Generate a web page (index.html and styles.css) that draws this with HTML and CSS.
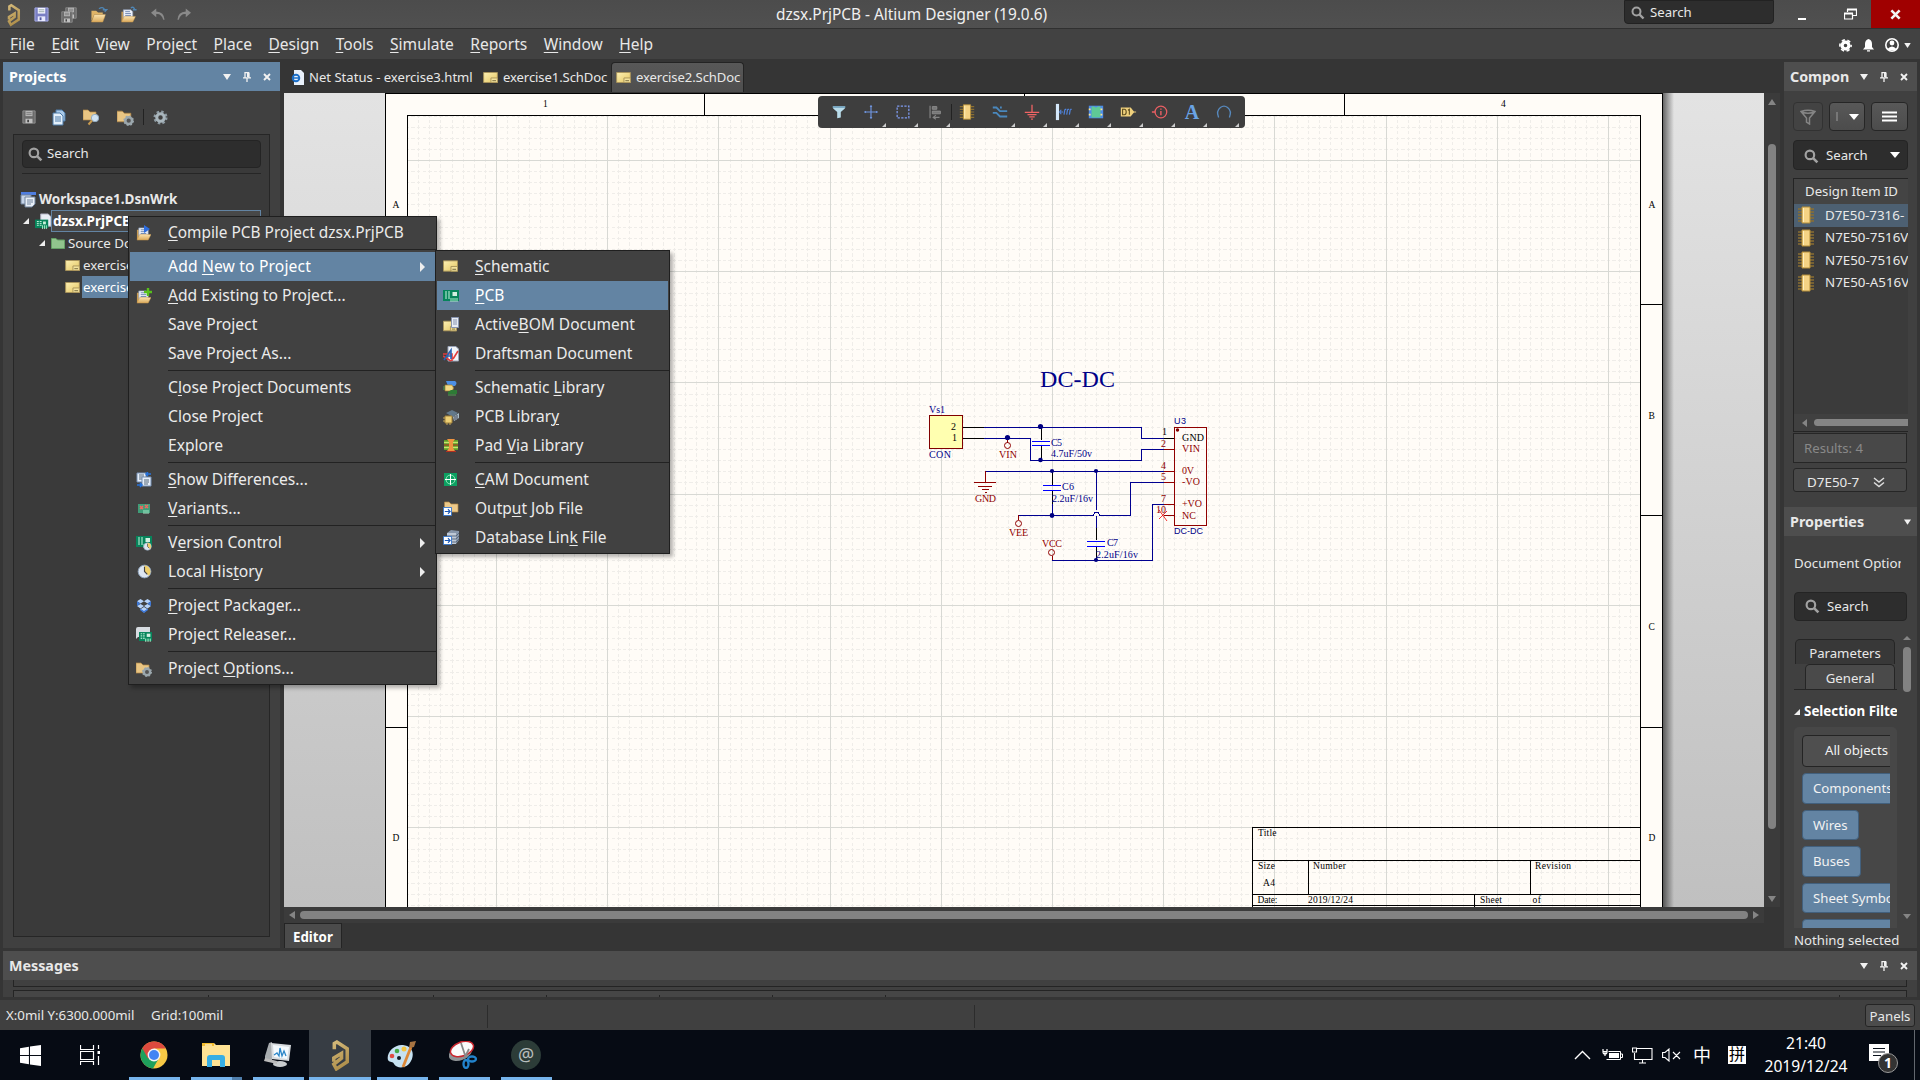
FILE: index.html
```html
<!DOCTYPE html>
<html lang="en">
<head>
<meta charset="utf-8">
<title>dzsx.PrjPCB - Altium Designer (19.0.6)</title>
<link rel="stylesheet" href="styles.css">
</head>
<body>
<svg class="defs" aria-hidden="true">
  <defs>
    <linearGradient id="gold" gradientUnits="userSpaceOnUse" x1="0" y1="0" x2="20" y2="30"><stop offset="0" stop-color="#d9bf80"/><stop offset="1" stop-color="#a5843f"/></linearGradient>
    <linearGradient id="fold" x1="0" y1="0" x2="0" y2="1"><stop offset="0" stop-color="#fbe3ae"/><stop offset="1" stop-color="#d9a95c"/></linearGradient>
    <linearGradient id="sheet" x1="0" y1="0" x2="1" y2="1"><stop offset="0" stop-color="#fdf0b4"/><stop offset="1" stop-color="#e3c661"/></linearGradient>
    <symbol id="altium" viewBox="0 0 20 30"><path d="M4.500 9V3.500L7 2L17 8.500V21L6.500 28L4 23.500L11.500 17.500V13L4 17.500V21" fill="none" stroke="url(#gold)" stroke-width="3.400"/></symbol>
    <symbol id="save" viewBox="0 0 16 16"><path d="M1 1H15V15H1Z" fill="#7a7fc4" stroke="#a9aee6"/><path d="M4 1H12V7H4Z" fill="#f4f5ff"/><path d="M5 3H11M5 5H11" stroke="#9aa"/><path d="M4 10H12V15H4Z" fill="#e8eaff"/><path d="M6 11H8V14H6Z" fill="#555ba4"/></symbol>
    <symbol id="save-gray" viewBox="0 0 16 16"><path d="M1 1H15V15H1Z" fill="#6b6b6b" stroke="#929292"/><path d="M4 1H12V7H4Z" fill="#b5b5b5"/><path d="M5 3H11M5 5H11" stroke="#777"/><path d="M4 10H12V15H4Z" fill="#c0c0c0"/><path d="M6 11H8V14H6Z" fill="#444"/></symbol>
    <symbol id="folder" viewBox="0 0 16 16"><path d="M1 14V3H6L8 5H13V7H4Z" fill="#e0b467"/><path d="M1 15L4 7H16L13 15Z" fill="url(#fold)" stroke="#c89648" stroke-width=".5"/></symbol>
    <symbol id="folder-docs" viewBox="0 0 16 16"><path d="M1 14V4H4V14Z" fill="#c99b50"/><path d="M3 2H11L13 4V11H3Z" fill="#eef3fb" stroke="#8b9bb8" stroke-width=".7"/><path d="M5 4H10M5 6H11M5 8H11" stroke="#6d86b0"/><path d="M1 15L4 9H16L13 15Z" fill="url(#fold)" stroke="#c89648" stroke-width=".5"/></symbol>
    <symbol id="sch" viewBox="0 0 16 12"><path d="M.5 .5H15.5V11.5H.5Z" fill="url(#sheet)" stroke="#a8935a"/><path d="M8.500 6.500H15.500V11.500H8.500Z" fill="#f4e39c" stroke="#a8935a"/><path d="M10 9.500H14" stroke="#6f6238"/></symbol>
    <symbol id="pcb" viewBox="0 0 16 13"><path d="M0 1H16V12H0Z" fill="#07845b"/><path d="M2 3H4M2 5H4M2 7H4M2 9H4M5 3H7M5 5H7M5 7H7M5 9H7" stroke="#c8f5df"/><path d="M9.500 3H14V7H9.500Z" fill="#d2efe0"/><path d="M8 9V13M10 9V13M12 9V13M14 9V13" stroke="#a9ecc8"/></symbol>
    <symbol id="pcb-doc" viewBox="0 0 18 18"><path d="M6 1H14L17 4V14H6Z" fill="#e9edf5" stroke="#aab"/><path d="M0 7H14V16H0Z" fill="#07845b"/><path d="M2 9H4M2 11H4M2 13H4M5 9H7M5 11H7M5 13H7" stroke="#c8f5df"/><path d="M8.500 9H11.500V12H8.500Z" fill="#c9f0da"/><path d="M8 13V17M10 13V17M12 13V17" stroke="#a9ecc8"/></symbol>
    <symbol id="mag" viewBox="0 0 14 14"><circle cx="5.500" cy="5.500" r="4" fill="none" stroke="#a2a2a2" stroke-width="2"/><path d="M8.500 8.500L12.500 12.500" stroke="#a2a2a2" stroke-width="2.400"/></symbol>
    <symbol id="gear" viewBox="0 0 16 16"><circle cx="8" cy="8" r="6.200" fill="none" stroke="#8e9ba3" stroke-width="2.600" stroke-dasharray="2.600 2.270"/><circle cx="8" cy="8" r="4" fill="none" stroke="#a9b6bd" stroke-width="3.200"/></symbol>
    <symbol id="tri" viewBox="0 0 8 6"><path d="M0 0H8L4 6Z" fill="#f2f2f2"/></symbol>
    <symbol id="pin" viewBox="0 0 8 10"><path d="M2 0V5.500M6 .5V5.500M2 .5H6M0 5.800H8M4 6V10" stroke="#f2f2f2" stroke-width="1.300" fill="none"/><path d="M4 1H6V5H4Z" fill="#f2f2f2"/></symbol>
    <symbol id="x" viewBox="0 0 8 8"><path d="M1 1L7 7M7 1L1 7" stroke="#f2f2f2" stroke-width="1.900"/></symbol>
    <symbol id="chip" viewBox="0 0 18 18"><path d="M1 3H17M1 6H17M1 9H17M1 12H17M1 15H17" stroke="#8a6f33" stroke-width="1.300"/><path d="M5 1H13V17H5Z" fill="#f5d384" stroke="#b58f3a"/><path d="M6.500 2V16" stroke="#fff0bd"/></symbol>
    <symbol id="fold-gear" viewBox="0 0 16 16"><path d="M0 2H5L7 4H13V12H0Z" fill="#e9c583" stroke="#b38746" stroke-width=".7"/><circle cx="11" cy="11" r="3.200" fill="#555" stroke="#9ba7ad" stroke-width="2.400"/><circle cx="11" cy="11" r="4.400" fill="none" stroke="#9ba7ad" stroke-width="1.200" stroke-dasharray="1.700 1.750"/></symbol>
    <symbol id="clock" viewBox="0 0 16 16"><circle cx="8" cy="8" r="6.800" fill="#dde6f1" stroke="#8ba0ba"/><path d="M8 8V1.500A6.500 6.500 0 0 1 12.500 12.500Z" fill="#f0cf6a"/><path d="M8 3V8L11 11" fill="none" stroke="#444" stroke-width="1.200"/></symbol>
    <symbol id="link" viewBox="0 0 10 10"><path d="M.5 .5H9.500V9.500H.5Z" fill="#fff" stroke="#2d6fc9"/><path d="M2 5H8M5.500 2.500L8 5L5.500 7.500" fill="none" stroke="#1b57b5" stroke-width="1.200"/></symbol>
  </defs>
</svg>

<header class="titlebar">
  <div class="quick">
    <svg width="15" height="24"><use href="#altium"/></svg>
    <svg width="15" height="15"><use href="#save"/></svg>
    <svg width="16" height="16" viewBox="0 0 16 16"><use href="#save-gray" x="4" width="12" height="12"/><use href="#save-gray" y="4" width="12" height="12"/></svg>
    <svg width="18" height="17" viewBox="0 0 18 18"><use href="#folder" y="2" width="16" height="16"/><path d="M9 3Q13 0 15 4M13 4H17L15 6" fill="none" stroke="#4f86b5" stroke-width="1.400"/></svg>
    <svg width="18" height="17" viewBox="0 0 18 18"><use href="#folder-docs" y="2" width="16" height="16"/><path d="M11 2Q14 0 15 4M13 4H17" fill="none" stroke="#4f86b5" stroke-width="1.400"/></svg>
    <svg width="14" height="13" viewBox="0 0 16 14"><path d="M6 0L0 5L6 10V6.500Q12 6 14 13H15.500Q15 4 6 3.500Z" fill="#8a8a8a"/></svg>
    <svg width="14" height="13" viewBox="0 0 16 14"><path d="M10 0L16 5L10 10V6.500Q4 6 2 13H.5Q1 4 10 3.500Z" fill="#8a8a8a"/></svg>
  </div>
  <h1 class="title">dzsx.PrjPCB - Altium Designer (19.0.6)</h1>
  <div class="top-search"><svg width="14" height="14"><use href="#mag"/></svg>Search</div>
  <div class="winbtns">
    <span><svg width="8" height="10"><path d="M0 8H8" stroke="#fff" stroke-width="2"/></svg></span>
    <span><svg width="13" height="12" viewBox="0 0 13 12"><path d="M3.500 4V1.500H12.500V7.500H9M.5 5.500H8.500V11H.5Z" fill="none" stroke="#fff" stroke-width="1.200"/><path d="M3 1.500H13M0 5.500H9" stroke="#fff" stroke-width="2"/></svg></span>
    <span class="close"><svg width="11" height="11" viewBox="0 0 8 8"><use href="#x" width="8" height="8"/></svg></span>
  </div>
</header>

<nav class="menubar">
  <a><u>F</u>ile</a><a><u>E</u>dit</a><a><u>V</u>iew</a><a>Proje<u>c</u>t</a><a><u>P</u>lace</a><a><u>D</u>esign</a><a><u>T</u>ools</a><a><u>S</u>imulate</a><a><u>R</u>eports</a><a><u>W</u>indow</a><a><u>H</u>elp</a>
  <div class="account">
    <svg width="13" height="13" viewBox="0 0 16 16"><circle cx="8" cy="8" r="4.200" fill="none" stroke="#fff" stroke-width="4"/><circle cx="8" cy="8" r="6.900" fill="none" stroke="#fff" stroke-width="2" stroke-dasharray="4 3.220" stroke-dashoffset="2"/></svg>
    <svg width="11" height="13" viewBox="0 0 11 13"><path d="M5.500 0Q9 1 9 5V8L11 10.500H0L2 8V5Q2 1 5.500 0M4 11.300H7V12.500H4Z" fill="#fff"/></svg>
    <svg width="14" height="14" viewBox="0 0 14 14"><circle cx="7" cy="7" r="6.200" fill="none" stroke="#fff" stroke-width="1.600"/><circle cx="7" cy="5" r="2.400" fill="#fff"/><path d="M2.500 11Q7 6 11.500 11Q7 14 2.500 11" fill="#fff"/></svg>
    <svg width="7" height="5" viewBox="0 0 8 6"><use href="#tri" width="8" height="6"/></svg>
  </div>
</nav>

<main class="main">
  <section class="panel projects">
    <div class="phead active"><b>Projects</b><span><svg width="8" height="6"><use href="#tri"/></svg><svg width="8" height="10"><use href="#pin"/></svg><svg width="8" height="8"><use href="#x"/></svg></span></div>
    <div class="ptools">
      <svg width="14" height="14"><use href="#save-gray"/></svg>
      <svg width="15" height="17" viewBox="0 0 15 17"><path d="M4 1H10L13 4V12H4Z" fill="#a9c9e8" stroke="#4d7ba8"/><path d="M1 4H8L11 7V16H1Z" fill="#e4f0fb" stroke="#4d7ba8"/><path d="M3 8H9M3 10H9M3 12H9" stroke="#4d7ba8"/></svg>
      <svg width="17" height="17" viewBox="0 0 17 17"><path d="M0 1H5L7 3H13V11H0Z" fill="#e9c583" stroke="#b38746" stroke-width=".7"/><circle cx="12" cy="9" r="3.700" fill="#cfe2f2" stroke="#93acc2"/><path d="M9 11.500L5.500 15.500" stroke="#c99b50" stroke-width="2"/></svg>
      <svg width="17" height="17"><use href="#fold-gear"/></svg>
      <i></i>
      <svg width="15" height="15"><use href="#gear"/></svg>
    </div>
    <div class="pbox">
      <div class="search"><svg width="15" height="15"><use href="#mag"/></svg>Search</div>
      <hr>
      <div class="tree">
        <div class="row bold"><svg width="17" height="17" viewBox="0 0 17 17"><path d="M1 1H16V4H1Z" fill="#4e7de0"/><path d="M1 4H11V13H1Z" fill="#c6d4e8" stroke="#71839c"/><path d="M5 6H15V13L12 16H5Z" fill="#e8eff8" stroke="#71839c"/><path d="M7 9H13M7 11H13M7 13H11" stroke="#71839c"/></svg><span class="ws">Workspace1.DsnWrk</span></div>
        <div class="row bold r1"><svg class="exp" width="6" height="6"><path d="M6 0V6H0Z" fill="#eee"/></svg><svg width="17" height="17"><use href="#pcb-doc"/></svg><span class="focus">dzsx.PrjPCB</span></div>
        <div class="row r2"><svg class="exp" width="6" height="6"><path d="M6 0V6H0Z" fill="#eee"/></svg><svg width="14" height="12" viewBox="0 0 14 12"><path d="M.5 1.500H5L6.500 3H13.500V11.500H.5Z" fill="#91c58d" stroke="#64a065"/></svg><span>Source Documents</span></div>
        <div class="row r3"><svg width="15" height="11"><use href="#sch"/></svg><span>exercise1.SchDoc</span></div>
        <div class="row r3"><svg width="15" height="11"><use href="#sch"/></svg><span class="sel">exercise2.SchDoc</span></div>
      </div>
    </div>
  </section>

  <section class="work">
    <div class="tabs">
      <a class="t1"><svg width="13" height="15" viewBox="0 0 13 15"><path d="M3 0H10L13 3V15H3Z" fill="#e9f1fb"/><circle cx="5" cy="8" r="3.300" fill="none" stroke="#1b6fc9" stroke-width="1.900"/><path d="M2 8H8" stroke="#1b6fc9" stroke-width="1.500"/></svg>Net Status - exercise3.html</a>
      <a class="t2"><svg width="15" height="11"><use href="#sch"/></svg>exercise1.SchDoc</a>
      <a class="t3"><svg width="15" height="11"><use href="#sch"/></svg>exercise2.SchDoc</a>
    </div>
    <div class="canvas">
      <svg class="schematic" width="1480" height="814" viewBox="284 93 1480 814">
        <defs><linearGradient id="shade"><stop offset="0" stop-color="#000" stop-opacity=".55"/><stop offset="1" stop-color="#000" stop-opacity="0"/></linearGradient></defs>
        <rect x="1663" y="93" width="11" height="814" fill="url(#shade)"/>
        <rect x="385" y="93" width="1278" height="814" fill="#fffcf7"/>
        <g id="grid" shape-rendering="crispEdges"></g>
        <g shape-rendering="crispEdges" fill="none" stroke="#000">
          <path d="M385.500 907V93.500H1662.500V907M407.500 907V115.500H1640.500V907" stroke-width="1.300"/>
          <path d="M704.500 93V115M1024.500 93V115M1344.500 93V115M385 303.500H407M385 515.500H407M385 727.500H407M1640 304.500H1662M1640 515.500H1662M1640 727.500H1662"/>
          <path d="M1252.500 907V827.500H1640M1252 860.500H1640M1252 894.500H1640M1252 905.500H1640M1308.500 860V894M1530.500 860V894M1474.500 894V907"/>
        </g>
        <g class="frame-text">
          <text x="543" y="107">1</text><text x="1501" y="107">4</text>
          <text x="392.500" y="208">A</text><text x="392.500" y="841">D</text>
          <text x="1648.500" y="208">A</text><text x="1648.500" y="419">B</text><text x="1648.500" y="630">C</text><text x="1648.500" y="841">D</text>
          <text x="1258" y="836" textLength="18.500">Title</text><text x="1258" y="869" textLength="17">Size</text><text x="1263" y="885.500" textLength="12">A4</text>
          <text x="1313" y="869" textLength="33">Number</text><text x="1535" y="869" textLength="36">Revision</text>
          <text x="1257.500" y="902.500" textLength="20">Date:</text><text x="1308" y="902.500" textLength="45">2019/12/24</text><text x="1480" y="902.500" textLength="22">Sheet</text><text x="1532.500" y="902.500" textLength="8.500">of</text>
        </g>
        <g shape-rendering="crispEdges" fill="none">
          <rect x="929.500" y="415.500" width="33" height="33" fill="#ffffb0" stroke="#800000"/>
          <path d="M963 427.500H984M963 438.500H984M1041.500 427V440M1041.500 446V460M1052.500 472V485M1052.500 491V504M1096.500 528V540M1096.500 547V560M1164 438.500H1174" stroke="#000"/>
          <path d="M984 427.500H1141.500V438.500H1164M984 438.500H1030.500V460.500H1141.500V449.500H1164M985.500 471.500H1164M1018.500 515.500H1093M1100 515.500H1130.500V482.500H1164M1052 560.500H1152.500V504.500H1164M1096.500 471V510M1096.500 516V528M1052.500 504V516" stroke="#000090"/>
          <path d="M1093 515.500L1095 512.500H1098L1100 515.500" stroke="#000090"/>
          <path d="M1032 441.500H1050M1032 445.500H1050M1043 485.500H1061M1043 490.500H1061M1087 541.500H1105M1087 546.500H1105" stroke="#0000ff"/>
          <rect x="1174.500" y="427.500" width="32" height="98" stroke="#900000"/>
          <path d="M1164 449.500H1174M1164 471.500H1174M1164 482.500H1174M1164 504.500H1174M1164 515.500H1174M985.500 471V482M974 482.500H996M978 486.500H992M982 489.500H989M985 492.500H987M1007.500 438V443M1018.500 515V520M1052.500 560V556" stroke="#900000"/>
        </g>
        <g fill="none" stroke="#900000"><circle cx="1007.500" cy="445.500" r="3"/><circle cx="1018.500" cy="523.500" r="3"/><circle cx="1051.500" cy="552.500" r="3"/><path d="M1159 510L1167 521M1167 511L1159 519" stroke="#f00000" stroke-width=".8"/></g>
        <g fill="#000080"><circle cx="1040.500" cy="426.500" r="2.600"/><circle cx="1007.500" cy="437.500" r="2.600"/><circle cx="1040.500" cy="460" r="2.300"/><circle cx="1052" cy="471" r="2.100"/><circle cx="1096" cy="471" r="2.100"/><circle cx="1052" cy="515.500" r="2.400"/><circle cx="1096" cy="560" r="2.100"/></g>
        <circle cx="1177.500" cy="430" r="1.700" fill="#800000"/>
        <g class="part">
          <text class="big" x="1040" y="387" textLength="75">DC-DC</text>
          <text x="929" y="413" textLength="16">Vs1</text><text x="929" y="457.500" textLength="22">CON</text>
          <text x="1051" y="445.500" textLength="11">C5</text><text x="1051" y="456.500" textLength="41">4.7uF/50v</text>
          <text x="1062" y="490" textLength="12">C6</text><text x="1052" y="502" textLength="41">2.2uF/16v</text>
          <text x="1107" y="545.500" textLength="11">C7</text><text x="1096" y="557.500" textLength="42">2.2uF/16v</text>
          <text class="sans" x="1174" y="424" textLength="12">U3</text><text class="sans" x="1174" y="534" textLength="29">DC-DC</text>
          <g class="blk"><text x="951" y="430">2</text><text x="952" y="441">1</text><text x="1162" y="435">1</text><text x="1182" y="441" textLength="22">GND</text></g>
          <g class="red"><text x="999" y="457.500" textLength="18">VIN</text><text x="975" y="502" textLength="21">GND</text><text x="1009" y="535.500" textLength="19">VEE</text><text x="1042" y="546.500" textLength="20">VCC</text>
          <text x="1161" y="447">2</text><text x="1161" y="469">4</text><text x="1161" y="480">5</text><text x="1161" y="502">7</text><text x="1156" y="513" textLength="10">10</text>
          <text x="1182" y="452" textLength="18">VIN</text><text x="1182" y="474" textLength="12">0V</text><text x="1182" y="485" textLength="18">-VO</text><text x="1182" y="507" textLength="20">+VO</text><text x="1182" y="519" textLength="14">NC</text></g>
        </g>
      </svg>
      <div class="vbar"><svg width="8" height="6"><path d="M0 6H8L4 0Z" fill="#858585"/></svg><i></i><svg width="8" height="6"><path d="M0 0H8L4 6Z" fill="#858585"/></svg></div>
      <div class="active-bar">
        <span><svg viewBox="0 0 20 20"><path d="M3.500 4H16.500V6L12 10V16L8 17V10L3.500 6Z" fill="#b9dcea"/><path d="M3 4.500H17" stroke="#7aa9c5" stroke-width="2"/></svg></span>
        <span class="more"><svg viewBox="0 0 20 20"><path d="M10 3V17M3 10H17" stroke="#6f94dd" stroke-width="1.300"/><path d="M10 2L11.500 4.500H8.500ZM10 18L11.500 15.500H8.500ZM2 10L4.500 8.500V11.500ZM18 10L15.500 8.500V11.500Z" fill="#6f94dd"/></svg></span>
        <span class="more"><svg viewBox="0 0 20 20"><path d="M3.500 3.500H16.500V16.500H3.500Z" fill="none" stroke="#7f9bf0" stroke-width="1.400" stroke-dasharray="2.500 1.500"/></svg></span>
        <span class="more"><svg viewBox="0 0 20 20"><path d="M4.500 3V17M9 16H15M11 13.500L8 16L11 18" stroke="#858585" fill="none" stroke-width="1.300"/><path d="M7 4H12V7H7ZM7 9H16V12H7Z" fill="#777" stroke="#8d8d8d"/></svg></span>
        <i></i>
        <span><svg viewBox="0 0 20 20"><use href="#chip" x="1" y="1" width="18" height="18"/></svg></span>
        <span class="more"><svg viewBox="0 0 20 20"><path d="M2 5H6L10 9H18M2 11H6L10 15H18M10 5H12" fill="none" stroke="#4a88bd" stroke-width="2"/></svg></span>
        <span class="more"><svg viewBox="0 0 20 20"><path d="M10 2V10M2 10.500H18M5 13H15M7 15.500H13M9 18H11" stroke="#f26464" stroke-width="1.400"/></svg></span>
        <span class="more"><svg viewBox="0 0 20 20"><path d="M1 1H4.500V19H1Z" fill="#d5e8fa"/><path d="M5 10L7 7.500M5 10L7 12.500M5 10H9M10 13L11 7M13 13L14 7M16 13L17 7M11 7H12.500M14 7H15.500M17 7H18.500" stroke="#4f83dc" stroke-width="1.300" fill="none"/></svg></span>
        <span class="more"><svg viewBox="0 0 20 20"><path d="M2 3H18V17H2Z" fill="#4e8ce8"/><path d="M5 4H8Q10 6 12 4H15V16H5Z" fill="#5fc996"/><path d="M2 7H5M2 13H5M15 7H18M15 13H18" stroke="#ffe68a" stroke-width="2" stroke-dasharray="2 1"/></svg></span>
        <span class="more"><svg viewBox="0 0 20 20"><path d="M2 5H13L17 10L13 15H2Z" fill="#efd07c"/><path d="M16 10H19" stroke="#efd07c"/><path d="M4 7V13H6Q8 13 8 10Q8 7 6 7ZM10 8L11.500 7V13" fill="none" stroke="#5a4a1e" stroke-width="1.200"/></svg></span>
        <span class="more"><svg viewBox="0 0 20 20"><circle cx="11" cy="10" r="6.500" fill="none" stroke="#e95f63" stroke-width="1.400"/><path d="M1 10H5M11 9V13.500M11 6V7.500" stroke="#e95f63" stroke-width="1.600"/></svg></span>
        <span class="more letter">A</span>
        <span class="more"><svg viewBox="0 0 20 20"><path d="M4 16Q1 9 6 5Q10 2 14 5Q19 9 16 16" fill="none" stroke="#5789bd" stroke-width="1.500"/></svg></span>
      </div>
    </div>
    <div class="hbar"><svg width="6" height="8"><path d="M6 0V8L0 4Z" fill="#858585"/></svg><i></i><svg width="6" height="8"><path d="M0 0V8L6 4Z" fill="#858585"/></svg></div>
    <div class="editor-row"><b>Editor</b></div>
  </section>

  <aside class="right">
    <div class="phead"><b>Compon</b><span><svg width="8" height="6"><use href="#tri"/></svg><svg width="8" height="10"><use href="#pin"/></svg><svg width="8" height="8"><use href="#x"/></svg></span></div>
    <div class="comp">
      <div class="btns">
        <span class="off"><svg width="16" height="16" viewBox="0 0 16 16"><path d="M1 2.500Q8 0 15 2.500L9.500 9V15L6.500 13V9ZM1 2.500Q8 6 15 2.500" fill="none" stroke="#858585" stroke-width="1.500"/></svg></span>
        <span class="drop"><em></em><svg width="10" height="6"><path d="M0 0H10L5 6Z" fill="#fff"/></svg></span>
        <span class="burger"><svg width="15" height="11"><path d="M0 1.500H15M0 5.500H15M0 9.500H15" stroke="#fff" stroke-width="2"/></svg></span>
      </div>
      <div class="search"><svg width="15" height="15"><use href="#mag"/></svg>Search<svg class="end" width="10" height="6"><path d="M0 0H10L5 6Z" fill="#fff"/></svg></div>
      <div class="list">
        <div class="lhead">Design Item ID</div>
        <div class="litem on"><svg width="18" height="18"><use href="#chip"/></svg>D7E50-7316-</div>
        <div class="litem"><svg width="18" height="18"><use href="#chip"/></svg>N7E50-7516V</div>
        <div class="litem"><svg width="18" height="18"><use href="#chip"/></svg>N7E50-7516V</div>
        <div class="litem"><svg width="18" height="18"><use href="#chip"/></svg>N7E50-A516V</div>
        <div class="lscroll"><svg width="5" height="8"><path d="M5 0V8L0 4Z" fill="#858585"/></svg><i></i></div>
      </div>
      <div class="results">Results: 4</div>
      <div class="detail">D7E50-7<svg width="12" height="11"><path d="M1 1L6 5L11 1M1 5.500L6 9.500L11 5.500" fill="none" stroke="#ddd" stroke-width="1.500"/></svg></div>
    </div>
    <div class="phead prop"><b>Properties</b><span><svg width="7" height="6"><use href="#tri"/></svg></span></div>
    <div class="props">
      <div class="doc-opt">Document Options</div>
      <div class="search"><svg width="15" height="15"><use href="#mag"/></svg>Search</div>
      <div class="scroller">
        <div class="content">
          <div class="ptab par">Parameters</div>
          <div class="gline"><div class="ptab gen">General</div></div>
          <div class="sf"><svg width="6" height="6"><path d="M6 0V6H0Z" fill="#eee"/></svg><b>Selection Filter</b></div>
          <div class="filters"><div class="clip">
            <span class="all">All objects</span><span class="w">Components</span><span>Wires</span><span>Buses</span><span class="w">Sheet Symbols</span><span class="w"></span>
          </div></div>
        </div>
        <div class="sbar"><svg width="8" height="4"><path d="M0 4H8L4 0Z" fill="#858585"/></svg><i></i><svg class="dn" width="8" height="5"><path d="M0 0H8L4 5Z" fill="#858585"/></svg></div>
      </div>
      <div class="nothing">Nothing selected</div>
    </div>
  </aside>
</main>

<section class="messages">
  <div class="phead"><b>Messages</b><span><svg width="8" height="6"><use href="#tri"/></svg><svg width="8" height="10"><use href="#pin"/></svg><svg width="8" height="8"><use href="#x"/></svg></span></div>
  <div class="mrow1"></div>
  <div class="mrow2"><i></i><i></i><i></i><i></i><i></i><i></i><i></i></div>
</section>

<footer class="status">
  <span class="pos">X:0mil Y:6300.000mil</span><span class="gr">Grid:100mil</span><i></i><i></i><span class="panels">Panels</span>
</footer>

<div class="taskbar">
  <div class="task"><svg width="21" height="21" viewBox="0 0 20 20"><path d="M0 3L8.500 1.700V9.500H0ZM9.500 1.500L20 0V9.500H9.500ZM0 10.500H8.500V18.300L0 17ZM9.500 10.500H20V20L9.500 18.500Z" fill="#fff"/></svg></div>
  <div class="task"><svg width="20" height="20" viewBox="0 0 20 20"><path d="M.5 0V4.500H13.500V0M.5 20V16.500H13.500V20M.5 6.500H13.500V14.500H.5ZM18.500 0V4M18.500 11V20" fill="none" stroke="#fff" stroke-width="1.200"/><path d="M17.500 6H20V9H17.500Z" fill="#fff"/></svg></div>
  <div class="task run"><svg width="28" height="28" viewBox="0 0 28 28"><circle cx="14" cy="14" r="13.500" fill="#f7c945"/><path d="M14 14L2.300 7.300A13.500 13.500 0 0 0 13 27.500L19 17Z" fill="#1ea05c"/><path d="M14 14L8 17.500L2.300 7.300A13.500 13.500 0 0 1 25.900 7.500H14Z" fill="#dd4a3e"/><circle cx="14" cy="14" r="6.400" fill="#f4f4f4"/><circle cx="14" cy="14" r="5" fill="#4285f4"/></svg></div>
  <div class="task run split"><svg width="28" height="24" viewBox="0 0 28 24"><path d="M0 0H12L14 2H28V23H0Z" fill="#ffe394"/><path d="M0 0H12V3H0Z" fill="#f3bd2e"/><path d="M3 2H10" stroke="#fff"/><path d="M5 24V15Q5 12 8 12H20Q23 12 23 15V24H18V17H10V24Z" fill="#37aee3"/></svg></div>
  <div class="task run"><svg width="28" height="26" viewBox="0 0 28 26"><path d="M5 1L8 0V19L1 17V14Z" fill="#a8adb0"/><path d="M7 1L27 3L25 19L8 17Z" fill="#d7dbde"/><path d="M9 3L25 5L23 17L10 15Z" fill="#f4fafe"/><path d="M10 13L13 11L15 14L16 6L18 14L20 9L22 14" fill="none" stroke="#2c87c9" stroke-width="1.300"/><ellipse cx="16" cy="22" rx="7" ry="3" fill="#c9cdcf"/><path d="M1 16L13 19V22L0 19Z" fill="#bbb"/></svg></div>
  <div class="task cur"><svg width="22" height="31"><use href="#altium"/></svg></div>
  <div class="task run"><svg width="30" height="28" viewBox="0 0 30 28"><path d="M16 4C25 5 28 12 24 20C20 28 10 28 7 23C6 20 3 22 1 19C-1 12 7 3 16 4Z" fill="#c6e2f2"/><circle cx="5" cy="15" r="2.300" fill="#e04c42"/><circle cx="10" cy="10" r="2.300" fill="#45a945"/><circle cx="17" cy="8" r="2.500" fill="#f4c542"/><circle cx="12" cy="17" r="2" fill="#111b24"/><path d="M16 26L24 6" stroke="#dd8837" stroke-width="2.800"/><path d="M22 7L23 1L29 0L27 6Z" fill="#a77442"/></svg></div>
  <div class="task run"><svg width="30" height="28" viewBox="0 0 30 28"><ellipse cx="12" cy="12" rx="12" ry="7" fill="#8d9295" transform="rotate(-20 12 14)"/><ellipse cx="13" cy="8" rx="12" ry="7" fill="#fafafa" stroke="#c9262e" stroke-width="1.500" transform="rotate(-20 13 8)"/><path d="M12 2L17 17M20 8L15 18" stroke="#888" stroke-width="1.800"/><ellipse cx="23" cy="18" rx="4" ry="2.500" fill="none" stroke="#2283cc" stroke-width="2.300"/><ellipse cx="17" cy="23" rx="2.500" ry="4" fill="none" stroke="#2283cc" stroke-width="2.300"/></svg></div>
  <div class="task run"><span class="at">@</span></div>
  <div class="tray">
    <svg class="chev" width="17" height="10" viewBox="0 0 17 10"><path d="M1 9L8.500 1.500L16 9" fill="none" stroke="#fff" stroke-width="1.400"/></svg>
    <svg width="21" height="16" viewBox="0 0 21 16"><path d="M6.500 4.500H18.500V12.500H4.500M18.500 7H20.500V10.500H18.500" fill="none" stroke="#fff"/><path d="M7 6H17V11H7Z" fill="#fff"/><path d="M1 2V4.500H5V2M3 5V9M1 5Q1 7 3 7Q5 7 5 5" fill="none" stroke="#fff" stroke-width="1.200"/></svg>
    <svg width="21" height="17" viewBox="0 0 21 17"><path d="M5 1.500H20V12.500H2.500V6M10.500 13V16M7 16H14M.5 1H4.500V5H.5Z" fill="none" stroke="#fff" stroke-width="1.100"/></svg>
    <svg width="19" height="14" viewBox="0 0 19 14"><path d="M0.600 4.500H3L7 1V13L3 9.500H.6ZM11 4L18 11M18 4L11 11" fill="none" stroke="#fff" stroke-width="1.100"/></svg>
    <span class="cn">中</span><span class="ime">拼</span>
    <div class="clock"><span>21:40</span><span>2019/12/24</span></div>
    <div class="notif"><svg width="21" height="20" viewBox="0 0 21 20"><path d="M0 0H20V17H14V20L10 17H0Z" fill="#fff"/><path d="M4 4.500H16M4 8H16M4 11.500H12" stroke="#09101b" stroke-width="1.200"/></svg><b>1</b></div>
    <i class="desk"></i>
  </div>
</div>

<div class="menu ctx">
  <a><svg viewBox="0 0 16 16"><use href="#folder-docs" y="1" width="15" height="15"/><path d="M8 0L14 4L8 8Z" fill="#2d6de0"/></svg><u>C</u>ompile PCB Project dzsx.PrjPCB</a><hr>
  <a class="hot sub">Add <u>N</u>ew to Project</a>
  <a><svg viewBox="0 0 16 16"><use href="#folder-docs" y="1" width="15" height="15"/><path d="M12 0V8M8 4H16" stroke="#57c01c" stroke-width="2.400"/></svg><u>A</u>dd Existing to Project...</a>
  <a>Save Project</a><a>Save Project As...</a><hr>
  <a>C<u>l</u>ose Project Documents</a><a>Close Project</a><a>Explore</a><hr>
  <a><svg viewBox="0 0 16 16"><path d="M1 1H10V10H1Z" fill="#e6eef9" stroke="#7791b5"/><path d="M3 3H8M3 5H8M3 7H6" stroke="#567"/><path d="M6 5H15V14H6Z" fill="#e6eef9" stroke="#7791b5"/><path d="M8 8H13M8 10H13M8 12H12" stroke="#567"/><path d="M10 2H15M12 0L10 2L12 4M1 13H6M4 11L6 13L4 15" fill="none" stroke="#2673dd" stroke-width="1.500"/></svg><u>S</u>how Differences...</a>
  <a><svg viewBox="0 0 16 16"><path d="M2 3H14V12H2Z" fill="#3f9d78"/><path d="M4 5L7 8M7 5L4 8M9 4L12 7M12 4L9 7" stroke="#f06960" stroke-width="1.500"/><path d="M8 9V13M10 9V13M12 9V13" stroke="#a5e8c6"/></svg><u>V</u>ariants...</a><hr>
  <a class="sub"><svg viewBox="0 0 16 16"><use href="#pcb" y="0" width="16" height="13"/><use href="#clock" x="7" y="7" width="9" height="9"/></svg>V<u>e</u>rsion Control</a>
  <a class="sub"><svg viewBox="0 0 16 16"><use href="#clock" x="1" y="0" width="15" height="15"/></svg>Local His<u>t</u>ory</a><hr>
  <a><svg viewBox="0 0 16 16"><path d="M4.500 1L8 3.200L4.500 5.500L1 3.200ZM11.500 1L15 3.200L11.500 5.500L8 3.200ZM4.500 6L8 8L4.500 10.500L1 8ZM11.500 6L15 8L11.500 10.500L8 8ZM8 9L12 11.500L8 14.500L4 11.500Z" fill="#b5d2fa"/><path d="M1 3.200L4.500 5.500L1 8ZM15 3.200L11.500 5.500L15 8ZM4 10.500L8 13L12 10.500V12L8 15L4 12Z" fill="#3d78d8"/></svg><u>P</u>roject Packager...</a>
  <a><svg viewBox="0 0 16 16"><path d="M0 2Q0 0 2 0H14V10H2L0 12Z" fill="#d7dce1"/><use href="#pcb" x="3" y="4" width="13" height="11"/></svg>Project Releaser...</a><hr>
  <a><svg viewBox="0 0 16 16"><use href="#fold-gear" width="16" height="16"/></svg>Project <u>O</u>ptions...</a>
</div>
<div class="menu subm">
  <a><svg viewBox="0 0 16 16"><use href="#sch" y="1" width="15" height="12"/></svg><u>S</u>chematic</a>
  <a class="hot"><svg viewBox="0 0 16 16"><use href="#pcb" y="1" width="16" height="13"/></svg><u>P</u>CB</a>
  <a><svg viewBox="0 0 16 16"><use href="#sch" y="3" width="14" height="12"/><path d="M8.500 .5H15.500V10.500H8.500Z" fill="#e8edf5" stroke="#8794b0"/><path d="M10 3H14M10 5H14M10 7H14" stroke="#8794b0"/></svg>Active<u>B</u>OM Document</a>
  <a><svg viewBox="0 0 16 16"><path d="M5 .5H13L15.500 3V15H5Z" fill="#f2f5fa" stroke="#9aa4b8"/><path d="M0 8H9V15M0 10L8 15M10 13L15 5" fill="none" stroke="#e23b3b" stroke-width="1.600"/><path d="M1 14L8 4V13M4 10H9" fill="none" stroke="#2862b4" stroke-width="1.600"/></svg>Draftsman Document</a><hr>
  <a><svg viewBox="0 0 16 16"><path d="M3 1H12Q15 3 12 6H5Z" fill="#4d8fe4"/><path d="M2 5H9Q12 8 9 11H2Z" fill="#f3da86" stroke="#9c7a2f" stroke-width=".7"/><path d="M8 10H14V14H5V12Z" fill="#2d7a35"/><path d="M6 14V16M8 14V16M10 14V16M12 14V16M0 7H2M0 9H2" stroke="#4fa050"/></svg>Schematic <u>L</u>ibrary</a>
  <a><svg viewBox="0 0 16 16"><path d="M3 4L9 1L15 4L10 8Z" fill="#62788a"/><path d="M10 8L16 4V9L11 12Z" fill="#a7bcc8"/><path d="M12 7V11M14 6V10" stroke="#445"/><path d="M2 7H9V14H2Z" fill="#edcf74" stroke="#a0803a"/><path d="M0 9H2M0 12H2M4 14V16M7 14V16" stroke="#c7a858"/></svg>PCB Librar<u>y</u></a>
  <a><svg viewBox="0 0 16 16"><path d="M1 2H15V12H1Z" fill="#5d9f28"/><path d="M1 4.500H15M1 9.500H15" stroke="#c9e56c" stroke-width="1.700"/><path d="M1 7H15M3 13.500H13" stroke="#b42d20"/><path d="M4 1H12L10 4V10L12 13H4L6 10V4Z" fill="#ee9440"/></svg>Pad <u>V</u>ia Library</a><hr>
  <a><svg viewBox="0 0 16 16"><path d="M1 1H14V14H1Z" fill="#0da062"/><circle cx="7.500" cy="7.500" r="4.500" fill="none" stroke="#8fe8b9"/><path d="M7.500 2V13M2 7.500H13" stroke="#fff"/></svg><u>C</u>AM Document</a>
  <a><svg viewBox="0 0 16 16"><path d="M1.500 1H6L8 3H15V11H1.500Z" fill="#ecc98a" stroke="#b38746" stroke-width=".7"/><use href="#link" y="6" width="9" height="9"/></svg>Outp<u>u</u>t Job File</a>
  <a><svg viewBox="0 0 16 16"><path d="M4 3L8 0L16 1L13 4ZM13 4L16 1V10L13 14Z" fill="#8796aa"/><path d="M4 3H13V14H4Z" fill="#bfc9d6"/><path d="M4 6H13L16 3M4 9H13L16 6M4 12H13L16 9" fill="none" stroke="#5b6b80"/><use href="#link" y="6" width="9" height="9"/></svg>Database Lin<u>k</u> File</a>
</div>
<script src="grid.js"></script>
</body>
</html>
```
FILE: styles.css
```css
* { box-sizing: border-box; }
body {
  margin: 0; width: 1920px; height: 1080px; overflow: hidden; position: relative;
  display: flex; flex-direction: column; background: #353535; color: #e8e8e8;
  font-family: "Noto Sans", "Noto Sans CJK SC", sans-serif; font-size: 13.600px; line-height: 1; white-space: nowrap;
}
.defs { position: absolute; width: 0; height: 0; }
svg { flex: none; display: block; }
i, em { display: block; }
u { text-decoration-thickness: 1px; text-underline-offset: 2px; }

.titlebar { height: 29px; flex: none; display: flex; background: linear-gradient(#4c4c4c, #505050); border-bottom: 1px solid #303030; }
.quick { display: flex; align-items: center; gap: 12.500px; width: 700px; padding: 1px 0 0 6px; }
.title { margin: 0; font-size: 15.400px; font-weight: 400; line-height: 29px; width: 924px; padding-left: 76px; color: #f0f0f0; }
.top-search { width: 150px; height: 24px; background: #2d2d2d; border: 1px solid #222; border-radius: 0 0 4px 4px; display: flex; align-items: center; gap: 5px; padding: 1px 0 0 6px; font-size: 13.200px; }
.winbtns { display: flex; flex: 1; }
.winbtns span { width: 47px; height: 28px; display: flex; align-items: center; justify-content: center; }
.winbtns span:first-child { width: 55px; padding-top: 3px; }
.winbtns span:nth-child(2) { width: 42px; }
.winbtns .close { background: #a00000; flex: 1; }

.menubar { height: 30px; flex: none; display: flex; align-items: center; gap: 16.500px; padding: 2px 9px 0 10px; background: #424242; font-size: 15.550px; }
.account { margin-left: auto; display: flex; align-items: center; gap: 11px; }
.account svg:last-child { margin-left: -6px; }

.main { height: 889px; flex: none; display: flex; gap: 4px; padding: 3px 3px 0; }
.phead { height: 29px; flex: none; display: flex; align-items: center; justify-content: space-between; background: #4e4e4e; padding: 0 9px 0 6px; }
.phead b { font-size: 14.300px; padding-top: 1px; }
.phead.active { background: #6384a3; color: #fff; }
.phead span { display: flex; align-items: center; gap: 12px; }
.projects { width: 277px; background: #404040; display: flex; flex-direction: column; }
.ptools { height: 43px; display: flex; align-items: center; padding: 9px 0 0 19px; gap: 16.200px; }
.ptools i { width: 1px; height: 16px; background: #222; margin: 0 -7px; }
.pbox { margin: 0 10px 11px; flex: 1; background: #3a3a3a; border: 1px solid #262626; padding: 5px 8px; }
.search { height: 28px; background: #2d2d2d; border: 1px solid #242424; border-radius: 4px; display: flex; align-items: center; gap: 4px; padding-left: 5px; font-size: 13.200px; }
.pbox hr { border: 0; height: 1px; background: #262626; margin: 5px 0 14px; }
.row { height: 22px; display: flex; align-items: center; gap: 2px; margin-left: -2px; font-size: 13.350px; }
.row span { line-height: 22px; }
.row svg + span { padding-left: 1px; }
.bold { font-weight: 700; font-size: 13.500px; }
.row svg + .ws { padding-left: 0; }
.r1 { padding-left: 3px; }
.exp { margin-right: 4px; }
.row .focus { width: 213px; height: 22px; line-height: 20px; border: 1px solid #6384a3; background: #484848; color: #fff; margin-left: -3px; }
.r2 { padding-left: 19px; gap: 2px; }
.r3 { padding-left: 45px; }
.r3 .sel { background: #6384a3; color: #fff; }

.work { width: 1496px; display: flex; flex-direction: column; }
.tabs { height: 31px; flex: none; display: flex; font-size: 13.080px; }
.tabs a { display: flex; align-items: center; height: 30px; gap: 5px; padding-top: 1px; }
.tabs .t1 { width: 199px; padding-left: 7px; }
.tabs .t2 { width: 128px; letter-spacing: -.1px; }
.tabs .t3 { width: 133px; padding: 0 0 0 4px; border: 1px solid #242424; border-bottom: 0; border-radius: 4px 4px 0 0; background: linear-gradient(#585858, #4e4e4e); letter-spacing: -.1px; }
.canvas { position: relative; height: 814px; display: flex; background: linear-gradient(#e3e3e3, #c0c0c0); }
.schematic { width: 1480px; height: 814px; }
.vbar { width: 16px; background: #3b3b3b; display: flex; flex-direction: column; align-items: center; padding: 6px 0 5px; }
.vbar i { width: 8px; height: 685px; margin: 39px 0 auto; border-radius: 4px; background: #828282; }
.hbar { height: 16px; width: 1480px; background: #3b3b3b; display: flex; align-items: center; padding: 0 5px; justify-content: space-between; }
.hbar i { height: 8px; width: 1448px; border-radius: 4px; background: #828282; }
.editor-row b { display: block; width: 58px; height: 25px; line-height: 26px; padding-left: 8px; background: #4b4b4b; border: 1px solid #242424; border-bottom: 0; font-size: 13.300px; color: #fff; }
.frame-text { font-family: "Liberation Serif", serif; font-size: 9.500px; fill: #000; }
.part { font-family: "Liberation Serif", serif; font-size: 10px; fill: #000088; }
.part .big { font-size: 24px; }
.part .sans { font-family: "Liberation Sans", sans-serif; font-size: 9px; }
.part .blk { fill: #000; }
.part .red { fill: #900000; }
.active-bar { position: absolute; left: 534px; top: 3px; width: 427px; height: 32px; background: #3e3e3e; border-radius: 4px; display: flex; align-items: center; padding-left: 5px; }
.active-bar span { width: 32.100px; height: 32px; position: relative; display: flex; align-items: center; justify-content: center; flex: none; }
.active-bar svg { width: 18px; height: 18px; }
.active-bar i { width: 1px; height: 16px; background: #222; margin-right: -1px; }
.active-bar .more::after { content: ""; position: absolute; right: 1px; bottom: 1px; border: 2.500px solid; border-color: transparent #ccc #ccc transparent; }
.active-bar .letter { font: bold 20px "Liberation Serif", serif; color: #6aa3e4; }

.right { width: 133px; background: #404040; display: flex; flex-direction: column; overflow: hidden; }
.comp { height: 416px; padding: 11px 9px 0; }
.btns { display: flex; gap: 6px; height: 29px; margin-bottom: 9px; }
.btns span { border: 1px solid #262626; border-radius: 4px; background: linear-gradient(#585858, #4c4c4c); display: flex; align-items: center; justify-content: center; width: 37px; }
.btns .off { width: 30px; background: #434343; border-color: #323232; }
.btns .drop { gap: 11px; }
.btns em { width: 2px; height: 9px; background: #777; }
.right .search { height: 30px; padding: 2px 0 0 10px; gap: 7px; }
.right .end { margin-left: 15px; margin-top: -3px; }
.list { height: 254px; margin-top: 8px; border: 1px solid #242424; border-right: 0; background: #3b3b3b; overflow: hidden; display: flex; flex-direction: column; }
.lhead { height: 25px; line-height: 25px; padding-left: 11px; background: #444; font-size: 13.200px; }
.litem { height: 22.600px; display: flex; align-items: center; gap: 10px; padding: 0 0 0 3px; font-size: 13.350px; }
.litem.on { background: #4d6072; }
.lscroll { margin-top: auto; height: 17px; background: #404040; display: flex; align-items: center; gap: 7px; padding-left: 8px; }
.lscroll i { flex: 1; height: 7px; border-radius: 4px 0 0 4px; background: #858585; }
.results { margin-top: 1px; height: 30px; width: 114px; border: 1px solid #262626; background: #484848; line-height: 29px; padding-left: 10px; color: #888; font-size: 13.200px; }
.detail { margin-top: 5px; height: 24px; width: 114px; border: 1px solid #262626; border-radius: 3px; background: #484848; display: flex; align-items: center; padding: 5px 0 0 13px; gap: 14px; font-size: 13.400px; }
.prop { padding-right: 6px; }
.props { padding: 0 10px; height: 412px; display: flex; flex-direction: column; overflow: hidden; }
.doc-opt { width: 107px; overflow: hidden; height: 56px; line-height: 54px; font-size: 13.300px; flex: none; }
.props .search { width: 113px; height: 29px; flex: none; padding-top: 0; }
.scroller { display: flex; width: 120px; height: 294px; margin-top: 13px; flex: none; }
.content { width: 103px; padding-top: 5px; overflow: hidden; }
.ptab { border: 1px solid #252525; border-bottom: 0; border-radius: 5px 5px 0 0; text-align: center; line-height: 27px; height: 25px; width: 100px; margin-left: 1px; background: #383838; font-size: 13.200px; }
.gline { border-bottom: 1px solid #252525; height: 26px; }
.ptab.gen { width: 90px; margin-left: 11px; background: #4a4a4a; }
.sf { display: flex; align-items: center; gap: 4px; height: 37px; padding-top: 6px; font-size: 13.400px; color: #fff; }
.filters { background: #474747; border-radius: 5px 5px 0 0; padding: 8px 7px 0 8px; height: 201px; }
.clip { width: 88px; height: 193px; overflow: hidden; display: flex; flex-direction: column; align-items: flex-start; gap: 6px; }
.clip span { height: 30.500px; flex: none; padding: 0 10px; line-height: 28px; border: 1px solid #42607d; border-radius: 4px; background: #6384a3; color: #f2f2f2; font-size: 13.200px; }
.clip .w { width: 110px; }
.clip .all { width: 110px; padding-left: 22px; border-color: #242424; background: #4f4f4f; height: 32px; line-height: 29px; }
.sbar { width: 17px; display: flex; flex-direction: column; align-items: center; padding-left: 2px; padding-top: 2px; }
.sbar i { width: 8px; height: 45px; border-radius: 4px; background: #828282; margin-top: 7px; }
.sbar .dn { margin: auto 0 9px; }
.nothing { line-height: 25px; height: 20px; font-size: 13.200px; }

.messages { height: 49px; flex: none; margin: 3px 3px 0; background: #404040; border-bottom: 3px solid #353535; display: flex; flex-direction: column; }
.mrow1 { height: 7px; margin: 0 10px 3px; border: 1px solid #242424; border-top: 0; }
.mrow2 { height: 7px; margin: 0 10px; border: 1px solid #242424; border-bottom: 0; display: flex; background: #464646; align-items: flex-end; gap: 112px; padding-left: 194px; }
.mrow2 i { width: 1px; height: 2px; background: #242424; }
.mrow2 i:first-child { margin-right: 112px; }
.mrow2 i:last-child { margin-left: auto; margin-right: 66px; }
.status { height: 30px; flex: none; display: flex; align-items: center; background: #404040; padding: 2px 5px 0 6px; font-size: 13.250px; }
.status .pos { width: 145px; } .status .gr { width: 336px; }
.status i { width: 1px; height: 23px; background: #2c2c2c; margin-right: 486px; }
.panels { margin: -1px 0 0 auto; width: 50px; height: 23px; line-height: 23px; text-align: center; border: 1px solid #242424; border-radius: 3px; background: #4c4c4c; }

.taskbar { height: 50px; flex: none; display: flex; background: #060b14; }
.task { width: 62px; height: 50px; display: flex; align-items: center; justify-content: center; flex: none; position: relative; }
.task:first-child { width: 60px; } .task:nth-child(2) { width: 60px; margin-right: 3px; }
.run::after { content: ""; position: absolute; left: 5.500px; width: 51px; bottom: 0; height: 3px; background: #76b4ec; }
.split::after { background: linear-gradient(90deg, #76b4ec 41px, #4f7eab 41px); }
.cur { background: #373d44; border-bottom: 3px solid #76b4ec; padding-top: 3px; }
.at { width: 30px; height: 30px; border-radius: 50%; background: #2c3c38; color: #b8bfbd; font-size: 18px; line-height: 28px; text-align: center; }
.tray { margin-left: auto; display: flex; align-items: center; gap: 9px; padding-right: 5px; }
.chev { margin-right: 2px; }
.cn { font-size: 18px; width: 18px; margin-left: 3px; color: #fff; }
.ime { background: #fff; color: #000; width: 18px; height: 18px; font-size: 16px; line-height: 17px; text-align: center; margin: 0 8px 0 8px; }
.clock { width: 86px; display: flex; flex-direction: column; align-items: center; gap: 7px; font-size: 15.600px; color: #fff; }
.notif { position: relative; width: 36px; margin-left: 11px; height: 22px; }
.notif b { position: absolute; left: 9px; top: 9px; width: 20px; height: 20px; border-radius: 50%; background: #333; border: 1px solid #999; font-size: 14px; line-height: 18px; text-align: center; color: #fff; }
.desk { width: 1px; height: 50px; background: #62676e; }

.menu { position: absolute; background: #414141; border: 1px solid #1f1f1f; padding: 1px 0; font-size: 15.500px; box-shadow: 3px 3px 4px rgba(0,0,0,.3); }
.menu a { display: flex; align-items: center; height: 29px; margin: 0 1px; padding-left: 38px; position: relative; white-space: pre; color: #ebebeb; }
.menu a svg { width: 16px; height: 16px; margin: 0 16px 0 -32px; }
.menu hr { border: 0; height: 1px; background: #222; margin: 2px 0 2px 39px; }
.menu .hot { background: #6384a3; color: #fff; }
.ctx { left: 128px; top: 216px; width: 309px; height: 469px; font-size: 15.650px; }
.ctx a:first-child { font-size: 15.400px; }
.ctx .hot { letter-spacing: .15px; }
.ctx .sub::after { content: ""; position: absolute; right: 10px; border: 5px solid transparent; border-left-color: #eee; border-right: 0; }
.subm { left: 435px; top: 250px; width: 235px; height: 304px; }
```
FILE: grid.js
```js
// Draws the sheet grid: dashed minor lines every 11.12px, solid major lines every tenth.
const ns = "http://www.w3.org/2000/svg";
const grid = document.getElementById("grid");
const step = 11.12;
function add(d, major, offset) {
  const p = document.createElementNS(ns, "path");
  p.setAttribute("d", d);
  p.setAttribute("stroke", major ? "#d8d9d4" : "#efede9");
  if (!major) {
    // Two dashes per cell, one of them centred on each crossing.
    p.setAttribute("stroke-dasharray", "3.36 2.2");
    p.setAttribute("stroke-dashoffset", offset);
  }
  grid.appendChild(p);
}
const lines = [];
for (let n = -8; n <= 102; n++) lines.push({ n, at: 496.5 + n * step, v: true });
for (let n = -4; n <= 67; n++) lines.push({ n, at: 160.5 + n * step, v: false });
lines.sort((a, b) => (a.n % 10 === 0) - (b.n % 10 === 0));
for (const l of lines) {
  const c = Math.floor(l.at) + 0.5;
  add(l.v ? `M${c} 116V907` : `M408 ${c}H1640`, l.n % 10 === 0, l.v ? 1.7 : 2.1);
}
```
